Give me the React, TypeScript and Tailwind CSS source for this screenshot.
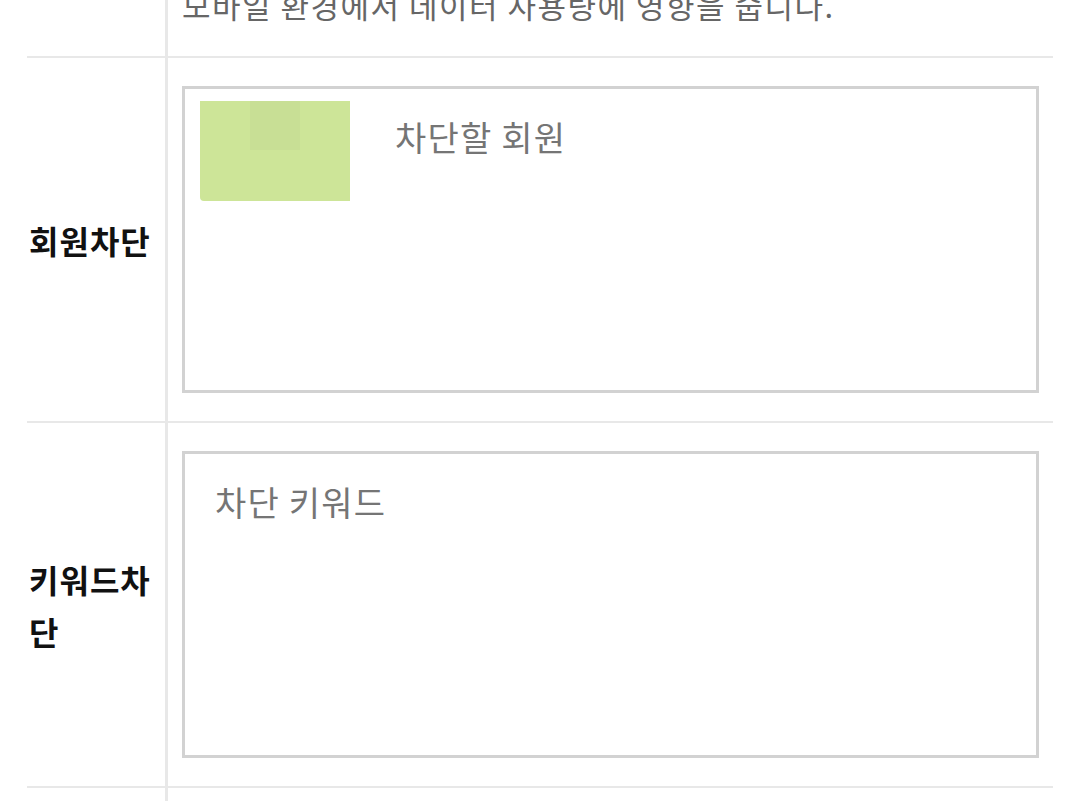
import { useState } from 'react'

const font = { fontFamily: '"Noto Sans CJK KR", "Noto Sans", sans-serif' }

function Row({ label, children }: { label?: string; children: React.ReactNode }) {
  return (
    <div className="grid grid-cols-[141px_1fr] border-b-[2px] border-[#e8e8e8]">
      <div className="border-r-[3px] border-[#e8e8e8] pl-[2px] pr-[12px] flex items-center">
        {label && (
          <span className="text-[32px] leading-[52px] tracking-[1px] font-bold text-[#111] break-all">{label}</span>
        )}
      </div>
      <div className="pl-[14px] pr-[14px]">{children}</div>
    </div>
  )
}

export default function App() {
  const [members, setMembers] = useState('')
  const [keywords, setKeywords] = useState('')

  return (
    <div className="min-h-screen bg-white overflow-hidden" style={font}>
      <div className="mx-[27px] mt-[-19px]">
        <Row>
          <p className="text-[31px] leading-[48px] tracking-[1.5px] text-[#666] pb-[27px] whitespace-nowrap">
            모바일 환경에서 데이터 사용량에 영향을 줍니다.
          </p>
        </Row>

        {/* 회원차단 */}
        <Row label="회원차단">
          <div className="relative pt-[28px] pb-[28px]">
            <textarea
              value={members}
              onChange={e => setMembers(e.target.value)}
              placeholder="차단할 회원"
              className="block w-full h-[307px] resize-none border-[3px] border-[#d2d2d2] bg-white pl-[210px] pt-[24px] text-[34px] leading-[48px] tracking-[1.2px] text-[#333] placeholder:text-[#757575] outline-none"
            />
            {/* 가려진 이미지 */}
            <div className="absolute left-[18px] top-[43px] w-[150px] h-[100px] bg-[#cde598] rounded-bl-[4px] shadow-[0_0_10px_rgba(255,255,255,0.9)]">
              <div className="ml-[50px] w-[50px] h-[49px] bg-[#c8df95]" />
            </div>
          </div>
        </Row>

        {/* 키워드차단 */}
        <Row label="키워드차단">
          <div className="pt-[28px] pb-[28px]">
            <textarea
              value={keywords}
              onChange={e => setKeywords(e.target.value)}
              placeholder="차단 키워드"
              className="block w-full h-[307px] resize-none border-[3px] border-[#d2d2d2] bg-white pl-[30px] pt-[24px] text-[34px] leading-[48px] tracking-[1.2px] text-[#333] placeholder:text-[#757575] outline-none"
            />
          </div>
        </Row>

        <Row>
          <div className="h-[80px]" />
        </Row>
      </div>
    </div>
  )
}
